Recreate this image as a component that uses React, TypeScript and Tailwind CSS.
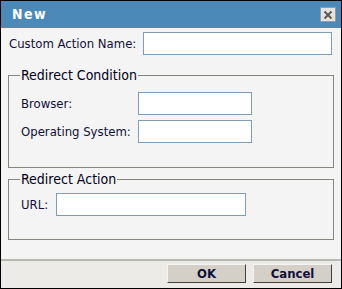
import React from "react";

const font = { fontFamily: '"DejaVu Sans Condensed", "DejaVu Sans", sans-serif', fontStretch: "condensed" as const };

function Input({ className }: { className: string }) {
  return (
    <div className={`h-[23px] bg-white border border-[#7f9db9] ${className}`} />
  );
}

export default function App() {
  return (
    <div
      className="w-[342px] h-[289px] border border-black bg-[#f4f4f4] flex flex-col text-[13px] text-[#10103a]"
      style={font}
    >
      <div className="h-[27px] bg-[#4a89b8] flex items-center justify-between pl-[11px] pr-[5px]">
        <span className="text-white font-bold text-[14px] tracking-[1.5px]">New</span>
        <div className="w-[16px] h-[15px] bg-[#e2e2e0] border border-[#9a9a9a] flex items-center justify-center">
          <svg width="10" height="10" viewBox="0 0 10 10">
            <path d="M1.5 1.5 L8.5 8.5 M8.5 1.5 L1.5 8.5" stroke="#555" strokeWidth="1.8" />
          </svg>
        </div>
      </div>
      <div className="flex-1 flex flex-col px-[7px]">
        <div className="flex items-center mt-[4px]">
          <span className="w-[135px] pl-[1px]">Custom Action Name:</span>
          <Input className="w-[189px]" />
        </div>
        <fieldset className="mt-[12px] border border-[#85857d] pl-[12px] h-[101px]">
          <legend className="-ml-[1px] px-[1px] text-[14px] font-medium leading-[16px] text-[#000020]">Redirect Condition</legend>
          <div className="grid grid-cols-[117px_114px] gap-y-[5px] items-center mt-[9px]">
            <span>Browser:</span>
            <Input className="" />
            <span>Operating System:</span>
            <Input className="" />
          </div>
        </fieldset>
        <fieldset className="mt-[3px] border border-[#85857d] pl-[12px] h-[69px]">
          <legend className="-ml-[1px] px-[1px] text-[14px] font-medium leading-[16px] text-[#000020]">Redirect Action</legend>
          <div className="flex items-center mt-[6px]">
            <span className="w-[35px]">URL:</span>
            <Input className="w-[190px]" />
          </div>
        </fieldset>
      </div>
      <div className="h-[29px] border-t-2 border-[#b8b8b2] bg-[#ecebe8] flex items-start justify-end gap-[7px] pr-[9px] pt-[3px]">
        <button className="w-[79px] h-[19px] bg-[#d4d0c8] border border-t-[#f4f4f4] border-l-[#f4f4f4] border-b-[#404040] border-r-[#404040] font-bold text-[13px] leading-none">OK</button>
        <button className="w-[79px] h-[19px] bg-[#d4d0c8] border border-t-[#f4f4f4] border-l-[#f4f4f4] border-b-[#404040] border-r-[#404040] font-bold text-[13px] leading-none">Cancel</button>
      </div>
    </div>
  );
}
